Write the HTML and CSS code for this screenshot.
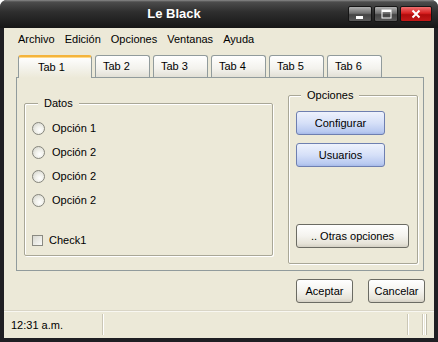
FILE: index.html
```html
<!DOCTYPE html>
<html lang="es">
<head>
  <meta charset="UTF-8">
  <title>Le Black</title>
  <link rel="stylesheet" href="styles.css">
</head>
<body>

  <div class="window">

    <!-- Title bar -->
    <div class="titlebar">
      <div class="title">Le Black</div>
      <div class="caption-btns">
        <span class="cbtn">
          <svg width="10" height="10" viewBox="0 0 10 10"><rect x="1" y="7" width="7" height="3" fill="#fff"/></svg>
        </span>
        <span class="cbtn">
          <svg width="11" height="10" viewBox="0 0 11 10"><rect x="1" y="1" width="9" height="8" fill="none" stroke="#fff" stroke-width="1"/><rect x="1" y="1" width="9" height="2" fill="#fff"/></svg>
        </span>
        <span class="cbtn close">
          <svg width="10" height="10" viewBox="0 0 10 10"><path d="M1.5 1.5 L8.5 8.5 M8.5 1.5 L1.5 8.5" stroke="#fff" stroke-width="2"/></svg>
        </span>
      </div>
    </div>

    <div class="client">

      <!-- Menu -->
      <ul class="menubar">
        <li>Archivo</li>
        <li>Edición</li>
        <li>Opciones</li>
        <li>Ventanas</li>
        <li>Ayuda</li>
      </ul>

      <!-- Tabs -->
      <div class="tabs">
        <div class="tab active">Tab 1</div>
        <div class="tab">Tab 2</div>
        <div class="tab">Tab 3</div>
        <div class="tab">Tab 4</div>
        <div class="tab">Tab 5</div>
        <div class="tab">Tab 6</div>
      </div>

      <div class="tabpanel">
        <div class="group datos">
          <div class="legend">Datos</div>
          <div class="radios">
            <div class="row"><span class="radio"></span>Opción 1</div>
            <div class="row"><span class="radio"></span>Opción 2</div>
            <div class="row"><span class="radio"></span>Opción 2</div>
            <div class="row"><span class="radio"></span>Opción 2</div>
          </div>
          <div class="row check-row"><span class="check"></span>Check1</div>
        </div>

        <div class="group opciones">
          <div class="legend">Opciones</div>
          <button class="btn blue first">Configurar</button>
          <button class="btn blue">Usuarios</button>
          <button class="btn wide">.. Otras opciones</button>
        </div>
      </div>

      <!-- Dialog buttons -->
      <div class="actions">
        <button class="btn small">Aceptar</button>
        <button class="btn small">Cancelar</button>
      </div>

      <!-- Status bar -->
      <div class="statusbar">
        <div class="sb-cell time">12:31 a.m.</div>
        <div class="sb-cell fill"></div>
        <div class="sb-cell end"></div>
        <div class="grip"></div>
      </div>

    </div>
  </div>

</body>
</html>
```

FILE: styles.css
```css
body { margin: 0; background: #fff; font: 11px "Liberation Sans", Arial, sans-serif; color: #000; }

.window { width: 438px; height: 342px; display: flex; flex-direction: column; background: #1f1f23; border-radius: 7px 7px 0 0; overflow: hidden; }

/* title bar */
.titlebar { height: 28px; flex: none; display: flex; align-items: center; background: linear-gradient(#8a8a8a 0, #4c4c4c 2px, #2e2e2e 12px, #161616 28px); }
.title { flex: 1; text-align: center; color: #fff; font-weight: bold; font-size: 13px; padding-bottom: 1px; }
.caption-btns { display: flex; gap: 2px; padding-right: 6px; }
.cbtn { box-sizing: border-box; width: 24px; height: 16px; border: 1px solid #151515; border-radius: 2px; background: linear-gradient(#b0b0b0, #6e6e6e 45%, #444 55%, #5a5a5a); display: flex; align-items: center; justify-content: center; }
.cbtn.close { width: 32px; background: linear-gradient(#f07070, #d82020 45%, #b00c0c 55%, #c41818); }

/* client area */
.client { flex: 1; margin: 0 4px 4px; background: #ece9d8; display: flex; flex-direction: column; }

.menubar { list-style: none; margin: 0; padding: 0 0 0 9px; height: 22px; display: flex; align-items: center; }
.menubar li { padding: 0 5px; }

/* tabs */
.tabs { display: flex; gap: 3px; height: 22px; margin: 5px 0 0 14px; }
.tab { box-sizing: border-box; width: 55px; padding: 0 0 0 7px; line-height: 20px; border: 1px solid #919b9c; border-bottom: none; border-radius: 3px 3px 0 0; background: linear-gradient(#fff, #f3f2ed 60%, #e2e0d6); }
.tab.active { width: 74px; padding-left: 19px; margin-bottom: -1px; position: relative; z-index: 1; border-top: 2px solid #f4b43c; box-shadow: inset 0 1px 0 #ffd98a; background: linear-gradient(#fff, #f4f3ec 50%, #ece9d8); line-height: 21px; }

.tabpanel { box-sizing: border-box; height: 194px; margin: 0 10px 0 12px; border: 1px solid #919b9c; display: flex; align-items: flex-start; gap: 15px; padding-left: 7px; }

/* group boxes */
.group { box-sizing: border-box; border: 1px solid #a9a797; box-shadow: 1px 1px 0 #fff, inset 1px 1px 0 #fff; border-radius: 2px; display: flex; flex-direction: column; padding-left: 7px; }
.datos { width: 249px; height: 153px; margin-top: 25px; }
.opciones { width: 130px; height: 169px; margin-top: 17px; padding-bottom: 15px; }
.legend { align-self: flex-start; margin: -8px 0 0 5px; padding: 0 6px; line-height: 14px; background: #ece9d8; }
.datos .legend { margin-left: 6px; }

.radios { margin-top: 6px; }
.row { height: 24px; display: flex; align-items: center; }
.radio { box-sizing: border-box; width: 13px; height: 13px; border-radius: 50%; border: 1px solid #85857c; background: radial-gradient(circle at 60% 65%, #fff 0, #f0f0ea 40%, #cfcfc6 100%); margin-right: 7px; }
.check-row { margin-top: 16px; }
.check { box-sizing: border-box; width: 11px; height: 11px; border: 1px solid #8a8a82; background: linear-gradient(135deg, #d8d8d0, #fafaf8); margin-right: 6px; }

/* buttons */
.btn { box-sizing: border-box; height: 24px; font: 11px "Liberation Sans", Arial, sans-serif; color: #000; border: 1px solid #6b6b63; border-radius: 3px; background: linear-gradient(#fff, #f4f3ee 50%, #e6e3d8 85%, #d4d0c4); padding: 0; }
.btn.blue { width: 89px; border-color: #6e7fb0; background: linear-gradient(#eef2fd, #d6e0f8 50%, #b8c9f0 90%, #a6b9e8); }
.btn.first { margin-top: 9px; margin-bottom: 8px; }
.btn.wide { width: 113px; margin-top: auto; }
.btn.small { width: 57px; }

.actions { display: flex; justify-content: flex-end; gap: 15px; padding: 8px 9px 0 0; }

/* status bar */
.statusbar { box-sizing: border-box; height: 28px; margin-top: 7px; display: flex; align-items: stretch; padding: 3px 0; border-top: 1px solid #d9d5c6; box-shadow: inset 0 1px 0 #f8f7f1; }
.sb-cell { border-right: 1px solid #cbc7b6; box-shadow: 1px 0 0 #fff; }
.time { width: 99px; padding-left: 7px; box-sizing: border-box; line-height: 22px; }
.fill { flex: 1; }
.end { width: 14px; }
.grip { width: 8px; border-left: 1px solid #fff; margin-left: 2px; box-shadow: inset 1px 0 0 #bfbcab; }
```
